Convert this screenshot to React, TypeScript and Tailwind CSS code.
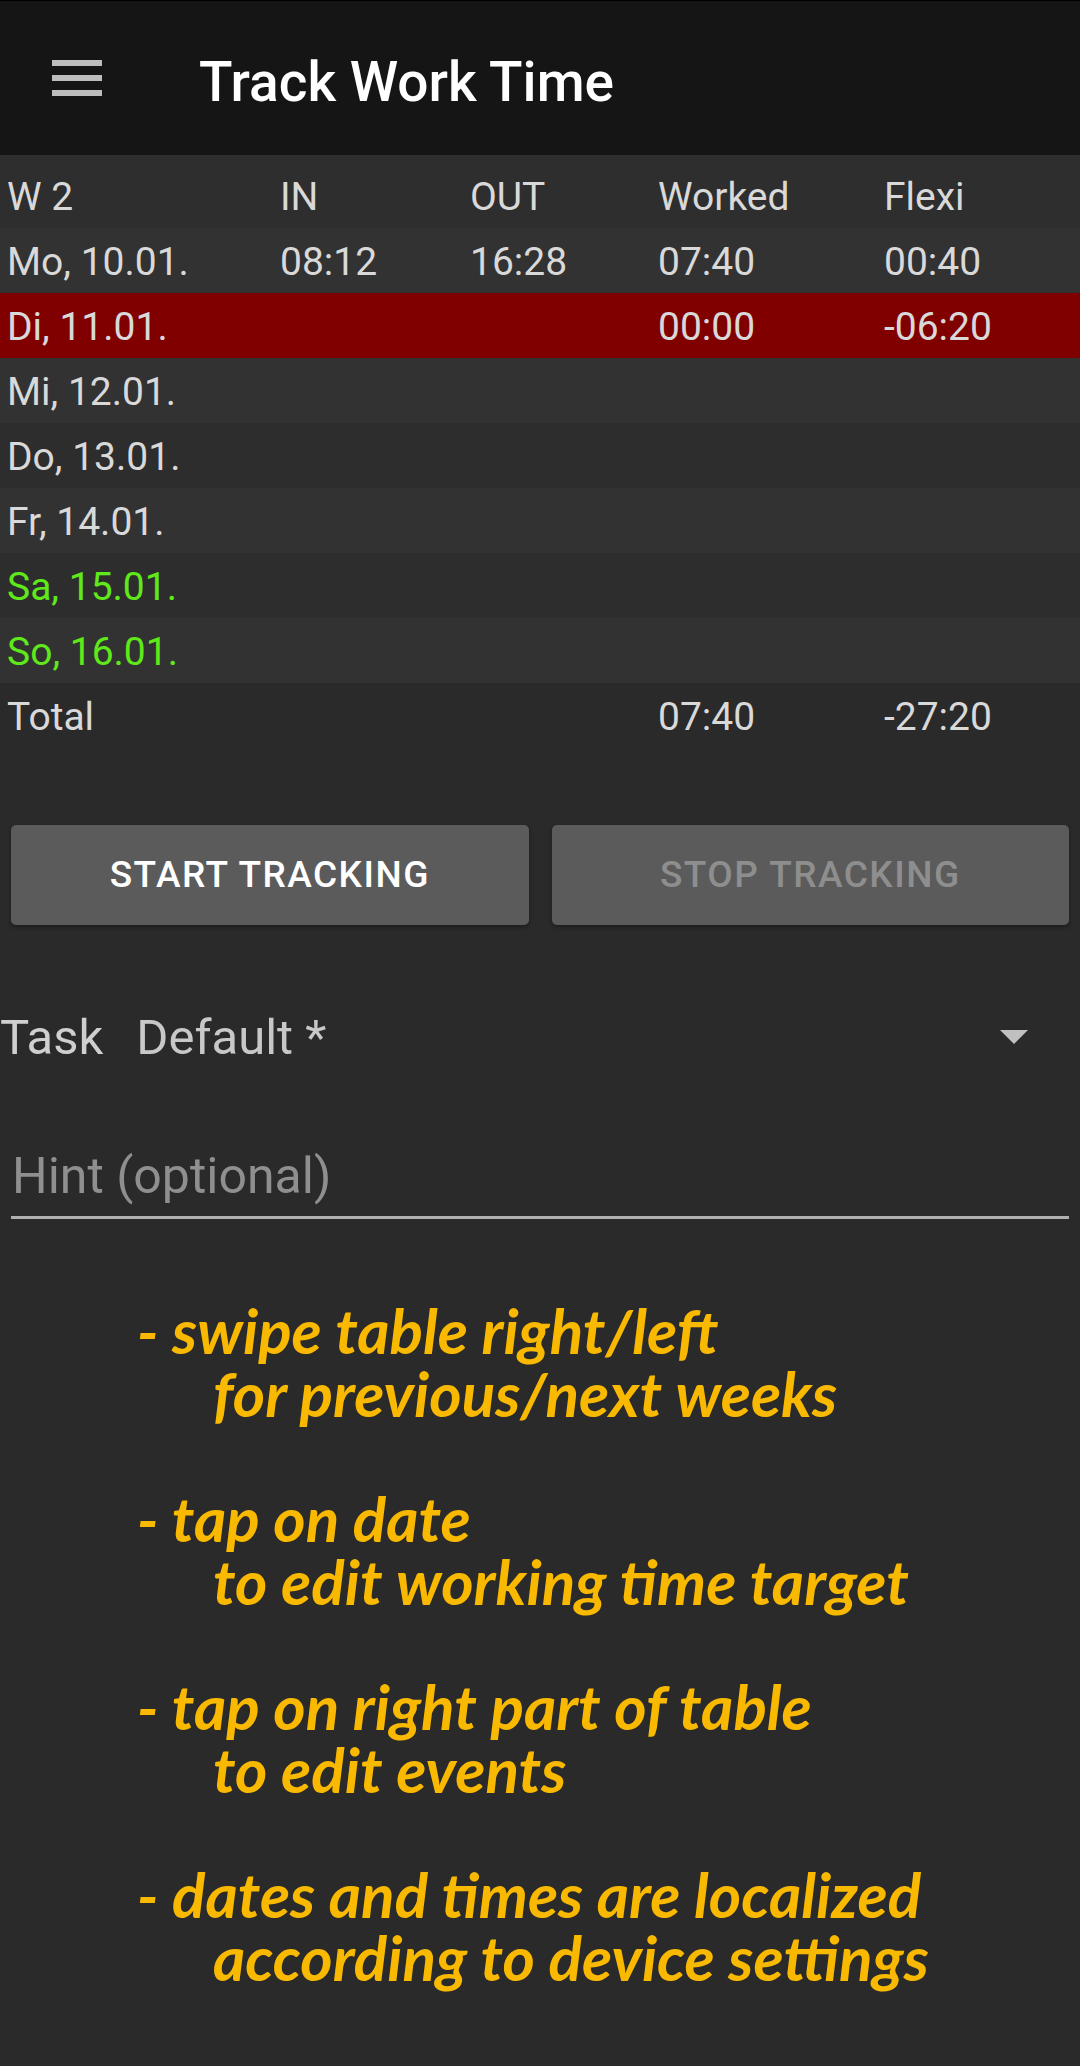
import React from 'react';

type Row = {
  day: string;
  inT?: string;
  outT?: string;
  worked?: string;
  flexi?: string;
  bg: string;
  weekend?: boolean;
};

const rows: Row[] = [
  { day: 'Mo, 10.01.', inT: '08:12', outT: '16:28', worked: '07:40', flexi: '00:40', bg: 'bg-[#323232]' },
  { day: 'Di, 11.01.', worked: '00:00', flexi: '-06:20', bg: 'bg-[#800000]' },
  { day: 'Mi, 12.01.', bg: 'bg-[#323232]' },
  { day: 'Do, 13.01.', bg: 'bg-[#2d2d2d]' },
  { day: 'Fr, 14.01.', bg: 'bg-[#323232]' },
  { day: 'Sa, 15.01.', bg: 'bg-[#2d2d2d]', weekend: true },
  { day: 'So, 16.01.', bg: 'bg-[#323232]', weekend: true },
];

const cols = 'grid grid-cols-[273px_190px_188px_226px_1fr] pl-[7px]';

const hints: [string, string][] = [
  ['- swipe table right/left', 'for previous/next weeks'],
  ['- tap on date', 'to edit working time target'],
  ['- tap on right part of table', 'to edit events'],
  ['- dates and times are localized', 'according to device settings'],
];

function Hamburger() {
  return (
    <div className="flex w-[50px] flex-col gap-[9px]">
      <span className="h-[6px] bg-[#bdbdbd]" />
      <span className="h-[6px] bg-[#bdbdbd]" />
      <span className="h-[6px] bg-[#bdbdbd]" />
    </div>
  );
}

export default function App() {
  return (
    <div className="min-h-[2066px] w-[1080px] bg-[#2a2a2a] font-['Roboto',sans-serif] text-[#d9d9d9]">
      {/* toolbar */}
      <div className="flex h-[155px] items-center border-t border-black bg-[#151515]">
        <div className="pl-[52px]">
          <Hamburger />
        </div>
        <h1 className="ml-[97px] pt-[8px] text-[55px] font-medium leading-none text-white">Track Work Time</h1>
      </div>

      {/* week table */}
      <div className="text-[39px] leading-none">
        <div className={`${cols} h-[73px] items-center bg-[#2e2e2e] pt-[12px]`}>
          <span>W 2</span>
          <span>IN</span>
          <span>OUT</span>
          <span>Worked</span>
          <span>Flexi</span>
        </div>
        {rows.map((r) => (
          <div key={r.day} className={`${cols} h-[65px] items-center pt-[4px] ${r.bg}`}>
            <span className={r.weekend ? 'text-[#5fe81a]' : ''}>{r.day}</span>
            <span>{r.inT}</span>
            <span>{r.outT}</span>
            <span>{r.worked}</span>
            <span>{r.flexi}</span>
          </div>
        ))}
        <div className={`${cols} h-[65px] items-center pt-[4px]`}>
          <span>Total</span>
          <span />
          <span />
          <span>07:40</span>
          <span>-27:20</span>
        </div>
      </div>

      {/* buttons */}
      <div className="mt-[77px] grid grid-cols-2 gap-[23px] px-[11px]">
        <button className="h-[100px] rounded-[5px] bg-[#5b5b5c] text-[37px] font-medium tracking-[0.04em] text-white shadow-[0_2px_4px_rgba(0,0,0,0.35)]">
          START TRACKING
        </button>
        <button className="h-[100px] rounded-[5px] bg-[#5b5b5c] text-[37px] font-medium tracking-[0.04em] text-[#8e8e8e] shadow-[0_2px_4px_rgba(0,0,0,0.35)]">
          STOP TRACKING
        </button>
      </div>

      {/* task selector */}
      <div className="mt-[62px] flex h-[100px] items-center text-[49px] leading-none">
        <span className="text-[#cfcfcf]">Task</span>
        <span className="ml-[33px] text-[#c8c8c8]">Default *</span>
        <svg className="ml-auto mr-[52px]" width="28" height="14" viewBox="0 0 28 14">
          <path d="M0 0 H28 L14 14 Z" fill="#c0c0c0" />
        </svg>
      </div>

      {/* hint field */}
      <div className="mx-[11px] mt-[59px] border-b-[3px] border-[#b0b0b0] pb-[10px]">
        <div className="pl-[1px] text-[50px] leading-[60px] text-[#8f8f8f]">Hint (optional)</div>
      </div>

      {/* usage notes */}
      <div className="mt-[80px] pl-[137px] font-['Lato',sans-serif] text-[62px] font-bold italic leading-[63px] text-[#f9b900]">
        {hints.map(([a, b], i) => (
          <div key={a} className={i > 0 ? 'mt-[62px]' : ''}>
            <div>{a}</div>
            <div className="pl-[76px]">{b}</div>
          </div>
        ))}
      </div>
    </div>
  );
}
